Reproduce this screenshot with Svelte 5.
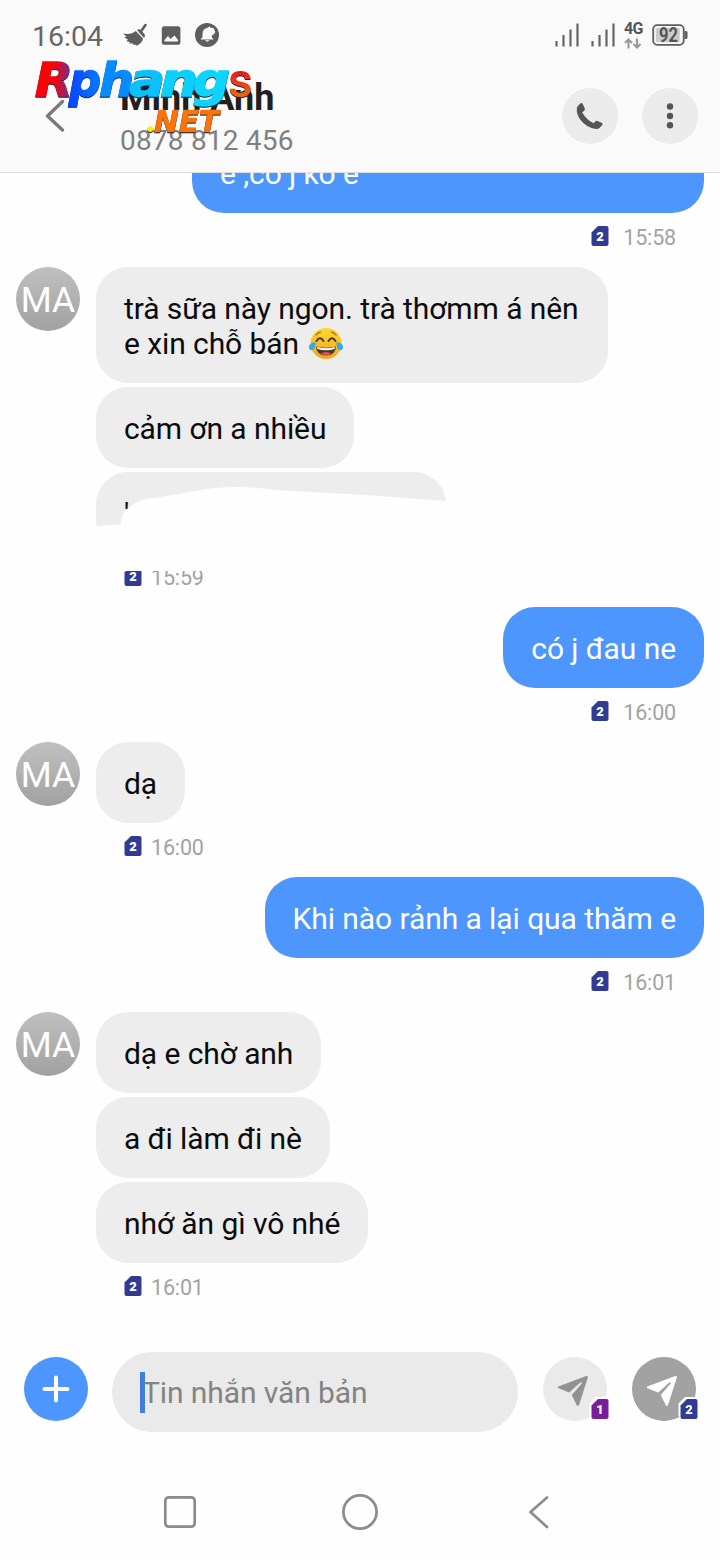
<script>
  const contact = { name: 'Minh Anh', initials: 'MA', phone: '0878 812 456' };

  const groups = [
    { mine: true, sim: 2, time: '15:58', messages: [{ lines: ['', 'e ,có j ko e'], wide: true }] },
    {
      mine: false,
      sim: 2,
      time: '15:59',
      erased: true,
      messages: [
        { lines: ['trà sữa này ngon. trà thơmm á nên', 'e xin chỗ bán'], joy: true, wide: true },
        { lines: ['cảm ơn a nhiều'] },
        { lines: ["'"], hidden: true }
      ]
    },
    { mine: true, sim: 2, time: '16:00', messages: [{ lines: ['có j đau ne'] }] },
    { mine: false, sim: 2, time: '16:00', messages: [{ lines: ['dạ'] }] },
    { mine: true, sim: 2, time: '16:01', messages: [{ lines: ['Khi nào rảnh a lại qua thăm e'] }] },
    {
      mine: false,
      sim: 2,
      time: '16:01',
      messages: [{ lines: ['dạ e chờ anh'] }, { lines: ['a đi làm đi nè'] }, { lines: ['nhớ ăn gì vô nhé'] }]
    }
  ];

  // letters of the stamp: x, width and fill of each
  const stamp = [
    { c: 'R', x: 0, w: 38, fill: 'url(#stamp-r)' },
    { c: 'p', x: 34, w: 32, fill: 'url(#stamp-p)' },
    { c: 'h', x: 64, w: 35, fill: '#078cff' },
    { c: 'a', x: 94, w: 36, fill: '#0cc0fb' },
    { c: 'n', x: 125, w: 38, fill: '#0cd0fc' },
    { c: 'g', x: 158, w: 37, fill: '#0cd4fd' }
  ];
</script>

{#snippet sim(n, color = '#303b94')}
  <svg class="sim" width="18" height="20" viewBox="0 0 18 20">
    <path d="M7 0H15.500Q17.500 0 17.500 2V18Q17.500 20 15.500 20H2.500Q.5 20 .5 18V6.500Z" fill={color} />
    <text x="9" y="15" text-anchor="middle">{n}</text>
  </svg>
{/snippet}

{#snippet plane()}
  <svg width="32" height="32" viewBox="0 0 32 32">
    <path
      d="M1.300 11.600 29.200 1Q31.400.5 30.800 2.700L22 30Q20.800 32 19.600 30L14.800 20 24.800 8.600Q25.400 6.700 23.300 7.600L12.200 17.400 1.400 13.300Q.2 12.500 1.300 11.600Z"
      fill="currentColor"
    />
  </svg>
{/snippet}

<div class="screen">
  <header>
    <div class="status">
      <span class="clock">16:04</span>
      <svg class="broom" width="25" height="24" viewBox="0 0 25 24">
        <path d="M22.500 2 17.500 9" stroke="#5e5e5e" stroke-width="2.600" stroke-linecap="round" />
        <path d="M14 7Q16 5.500 18 7.500L21.500 11Q22.800 13 21 15Z" fill="#5e5e5e" />
        <path
          d="M12.800 8 20 15.500Q19.500 20 13.500 22.800L12 21.500 10.500 22 9.500 20.300 6.500 20.800 6.800 19 3.500 18.300 5 16.500 1.200 14.500 3.500 13.500 0 10.500Q8 12 12.800 8Z"
          fill="#5e5e5e"
        />
      </svg>
      <svg class="photo" width="20" height="20" viewBox="0 0 20 20">
        <rect x=".8" y=".2" width="18.600" height="18.600" rx="2.500" fill="#5e5e5e" />
        <path d="M3.500 15.500V14L7 10 9.500 13 13.500 9.500 17 14V15.500Z" fill="#fafafa" />
      </svg>
      <svg class="bell" width="24" height="24" viewBox="0 0 24 24">
        <circle cx="12" cy="12" r="12" fill="#5e5e5e" />
        <path d="M5.500 16.500 7.500 14V11Q7.500 6 12 5L14.500 3.500Q16 5.500 18.500 5L20.300 9Q19.500 12 16.800 12.500V14L18.500 16.500ZM10 17.300H14.500Q12.300 20 10 17.300Z" fill="#fafafa" />
      </svg>
      <div class="system">
        {#each [0, 1] as i (i)}
          <svg width="24" height="24" viewBox="0 0 24 24">
            <path d="M1.500 18V23.500M8.500 12V23.500M15.500 6.500V23.500M22.500.5V23.500" stroke="#666" stroke-width="2.200" />
          </svg>
        {/each}
        <div class="network">
          <b>4G</b>
          <svg width="18" height="11" viewBox="0 0 18 11">
            <path d="M4.500 10.500V2M1 5 4.500 1.500 8 5M13 .5V9M9.500 6 13 9.500 16.500 6" fill="none" stroke="#999" stroke-width="2.100" />
          </svg>
        </div>
        <svg class="battery" width="36" height="22" viewBox="0 0 36 22">
          <rect x="1.200" y="1.200" width="30.500" height="19.600" rx="4" fill="#fafafa" stroke="#5e5e5e" stroke-width="1.800" />
          <rect x="3.800" y="3.800" width="24" height="14.400" rx="1.500" fill="#ccc" />
          <path d="M32.500 7H34Q35.500 7 35.500 8.500V13.500Q35.500 15 34 15H32.500Z" fill="#5e5e5e" />
          <text x="16.500" y="17.700" text-anchor="middle" textLength="19" lengthAdjust="spacingAndGlyphs">92</text>
        </svg>
      </div>
    </div>

    <div class="bar">
      <svg class="back" width="20" height="34" viewBox="0 0 20 34">
        <path d="M17.500 2.500 2.500 17 17.500 31" fill="none" stroke="#7a7a7a" stroke-width="3.400" stroke-linecap="round" stroke-linejoin="round" />
      </svg>
      <div class="who">
        <h1>{contact.name}</h1>
        <p>{contact.phone}</p>
      </div>
      <button class="round" aria-label="Gọi">
        <svg width="28" height="28" viewBox="0 0 28 28">
          <path
            d="M1.500 4.500 4.500 1.200Q5.700.4 6.500 1.600L8.800 6.400Q9.300 7.600 8.300 8.600L6.200 10.500Q10.500 17.800 17.600 21.300L19.300 19.500Q20.300 18.500 21.500 19L26 21Q27.200 21.800 26.300 23L23.500 26Q22.400 27.200 20 27Q10.500 26 4.200 17.600Q.5 12.500.8 7Q.8 5.300 1.500 4.500Z"
            fill="#555"
          />
        </svg>
      </button>
      <button class="round" aria-label="Thêm">
        <svg width="8" height="26" viewBox="0 0 8 26" fill="#555">
          <circle cx="4" cy="3.500" r="3.200" />
          <circle cx="4" cy="13" r="3.200" />
          <circle cx="4" cy="22.300" r="3.200" />
        </svg>
      </button>
    </div>

    <!-- site stamp lying over the contact name -->
    <svg class="stamp" width="226" height="84" viewBox="0 0 226 84">
      <defs>
        <linearGradient id="stamp-r">
          <stop offset=".5" stop-color="#f90309" />
          <stop offset="1" stop-color="#5638a8" />
        </linearGradient>
        <linearGradient id="stamp-p">
          <stop offset="0" stop-color="#0844ff" />
          <stop offset="1" stop-color="#087cff" />
        </linearGradient>
        <linearGradient id="stamp-s" x2="0" y2="1">
          <stop offset=".3" stop-color="#e5141c" />
          <stop offset=".8" stop-color="#f26a0c" />
        </linearGradient>
      </defs>
      <g class="letters">
        {#each stamp as l (l.c)}
          <text x={l.x} y="40.500" textLength={l.w} lengthAdjust="spacingAndGlyphs" fill={l.fill} stroke={l.fill}>{l.c}</text>
        {/each}
      </g>
      <text class="s" x="193" y="42" fill="url(#stamp-s)">s</text>
      <text class="dot" x="110" y="77">.</text>
      <text class="net" x="119" y="77" textLength="65" lengthAdjust="spacingAndGlyphs">NET</text>
    </svg>
  </header>

  <main>
    {#each groups as group, i (i)}
      <section class:mine={group.mine}>
        {#if !group.mine}
          <div class="avatar">{contact.initials}</div>
        {/if}
        <div class="stack">
          {#each group.messages as msg, j (j)}
            <div class="bubble" class:wide={msg.wide} class:hidden={msg.hidden}>
              {#each msg.lines as line, k (k)}
                <div class="line">
                  {line}
                  {#if msg.joy && k === msg.lines.length - 1}
                    <svg class="joy" width="36" height="34" viewBox="0 0 36 34">
                      <defs>
                        <linearGradient id="face" x2="0" y2="1">
                          <stop offset="0" stop-color="#fdd82f" />
                          <stop offset="1" stop-color="#f4a51f" />
                        </linearGradient>
                      </defs>
                      <circle cx="18" cy="16.500" r="15.500" fill="url(#face)" />
                      <path d="M8 19.500Q18 22 28 19.500Q27.500 28.500 18 28.500T8 19.500Z" fill="#4e342e" />
                      <path d="M9 20Q18 22.500 27 20L26.500 22Q18 24.500 9.500 22Z" fill="#fff" />
                      <path d="M12.500 26.500Q18 23.500 23.500 26.500Q18 29.500 12.500 26.500Z" fill="#ef4c50" />
                      <path d="M8.500 14Q12 8.500 15.500 14M20.500 14Q24 8.500 27.500 14" fill="none" stroke="#4e342e" stroke-width="2" stroke-linecap="round" />
                      <path d="M8 8Q10 5.500 12.500 5M28 8Q26 5.500 23.500 5" fill="none" stroke="#b9791c" stroke-width="1.500" stroke-linecap="round" />
                      <path d="M7.500 15Q1 16 .8 20Q1.500 24 5 23Q7.500 21.500 7.500 15ZM28.500 15Q35 16 35.200 20Q34.500 24 31 23Q28.500 21.500 28.500 15Z" fill="#35a9e5" />
                    </svg>
                  {/if}
                </div>
              {/each}
            </div>
          {/each}
          <div class="meta">
            {@render sim(group.sim)}
            <time>{group.time}</time>
          </div>
          {#if group.erased}
            <!-- white brush stroke over the last message of the group -->
            <svg class="eraser" width="360" height="100" viewBox="0 0 360 100">
              <path
                d="M-3 55Q14 52 25 53Q24 41 34 35Q43 26 60 26L105 18Q139 12 180 18L270 23 350 29H363V99H-3Z"
                fill="#fefefe"
              />
            </svg>
          {/if}
        </div>
      </section>
    {/each}
  </main>

  <footer>
    <button class="add" aria-label="Đính kèm">
      <svg width="28" height="28" viewBox="0 0 28 28">
        <path d="M14 2.500V25.500M2.500 14H25.500" stroke="#fff" stroke-width="4" stroke-linecap="round" />
      </svg>
    </button>
    <div class="input"><i></i><span>Tin nhắn văn bản</span></div>
    <button class="send" aria-label="Gửi bằng SIM 1">
      {@render plane()}
      <span class="tag">{@render sim(1, '#7b1e9c')}</span>
    </button>
    <button class="send active" aria-label="Gửi bằng SIM 2">
      {@render plane()}
      <span class="tag">{@render sim(2)}</span>
    </button>
  </footer>

  <nav>
    <svg width="36" height="36" viewBox="0 0 36 36"><rect x="3.300" y="3.300" width="29.400" height="29.400" rx="3.500" /></svg>
    <svg width="36" height="36" viewBox="0 0 36 36"><circle cx="18" cy="18" r="16.600" /></svg>
    <svg width="36" height="36" viewBox="0 0 36 36"><path d="M26 3.500 9.500 18 26 33" stroke-linecap="round" stroke-linejoin="round" /></svg>
  </nav>
</div>

<style>
  :global(body) {
    margin: 0;
    background: #fff;
  }
  .screen {
    width: 720px;
    height: 1560px;
    display: flex;
    flex-direction: column;
    overflow: hidden;
    background: #fefefe;
    color: #111;
    font-family: Roboto, 'Noto Sans', sans-serif;
  }
  svg {
    display: block;
    flex: none;
  }
  button {
    border: 0;
    padding: 0;
    display: grid;
    place-items: center;
    border-radius: 50%;
    flex: none;
  }

  header {
    position: relative;
    box-sizing: border-box;
    height: 173px;
    flex: none;
    background: #fafafa;
    border-bottom: 1px solid #dedede;
  }
  .status {
    height: 72px;
    box-sizing: border-box;
    padding: 0 33px 0 32px;
    display: flex;
    align-items: center;
  }
  .clock {
    width: 91px;
    font-size: 28.5px;
    color: #666;
  }
  .broom {
    position: relative;
    top: -1px;
  }
  .photo {
    margin-left: 13px;
  }
  .bell {
    margin-left: 14px;
    position: relative;
    top: -1px;
  }
  .system {
    margin-left: auto;
    display: flex;
    align-items: center;
    gap: 12px;
    position: relative;
    top: -1px;
    left: 1px;
  }
  .network {
    position: relative;
    width: 19px;
    margin: 0 -3px;
    display: flex;
    flex-direction: column;
    gap: 3px;
  }
  .network b {
    font-size: 16px;
    line-height: 13px;
    color: #555;
    letter-spacing: -0.7px;
    white-space: nowrap;
  }
  .battery text {
    font: bold 19.5px Roboto, sans-serif;
    fill: #555;
  }

  .bar {
    display: flex;
    align-items: center;
    height: 88px;
    padding: 0 22px 0 45px;
  }
  .who {
    flex: 1;
    margin: 6px 0 0 55px;
  }
  h1 {
    margin: 0;
    font-size: 36px;
    line-height: 43px;
    color: #1f1f1f;
  }
  p {
    margin: 0;
    font-size: 28px;
    line-height: 41px;
    color: #808080;
    letter-spacing: 0.2px;
  }
  .round {
    width: 56px;
    height: 56px;
    margin-left: 24px;
    background: #ebebeb;
  }
  .stamp {
    position: absolute;
    left: 35px;
    top: 55px;
    overflow: visible;
    filter: drop-shadow(0.7px 1.2px 0.3px #124);
  }
  .letters text {
    font: italic bold 46px 'DejaVu Sans', sans-serif;
    stroke-width: 1.3;
  }
  .s {
    font: 500 48px 'Roboto', sans-serif;
  }
  .dot {
    font: bold 38px 'Roboto', sans-serif;
    fill: #f7ee12;
  }
  .net {
    font: italic bold 31px 'DejaVu Sans', sans-serif;
    fill: #fb740b;
    stroke: #fb740b;
    stroke-width: 0.6;
  }

  main {
    height: 1144px;
    flex: none;
    display: flex;
    flex-direction: column;
    justify-content: flex-end;
    overflow: hidden;
  }
  section {
    display: flex;
    gap: 16px;
    padding: 0 16px;
  }
  section.mine {
    justify-content: flex-end;
  }
  .avatar {
    width: 64px;
    height: 64px;
    flex: none;
    display: flex;
    justify-content: center;
    align-items: center;
    box-sizing: border-box;
    padding-top: 2px;
    border-radius: 50%;
    background: linear-gradient(#c0c0c0, #a1a1a1);
    color: #fff;
    font-size: 35.5px;
  }
  .stack {
    position: relative;
    display: flex;
    flex-direction: column;
    align-items: flex-start;
  }
  .mine .stack {
    align-items: flex-end;
  }
  .bubble {
    box-sizing: border-box;
    padding: 24px 28px 22px;
    border-radius: 32px;
    background: #ededed;
    color: #0b0b0b;
    font-size: 30px;
    line-height: 35px;
    letter-spacing: -0.08px;
  }
  .bubble + .bubble {
    margin-top: 4px;
  }
  .mine .bubble {
    background: #4d96fe;
    color: #fff;
  }
  .wide {
    width: 512px;
  }
  .hidden {
    width: 350px;
  }
  .line {
    display: flex;
    align-items: center;
    height: 35px;
    white-space: nowrap;
  }
  .joy {
    margin-left: 9px;
  }
  .meta {
    height: 54px;
    display: flex;
    align-items: center;
    gap: 9px;
    padding: 0 28px;
    color: #a2a2a2;
    font-size: 21.5px;
    line-height: 26px;
    letter-spacing: -0.15px;
  }
  .mine .meta {
    gap: 14px;
  }
  .meta .sim {
    position: relative;
    top: -4px;
  }
  .sim text {
    font: 900 13px Roboto, sans-serif;
    letter-spacing: 0;
    fill: #fff;
  }
  .meta time {
    position: relative;
    top: -2px;
  }
  .eraser {
    position: absolute;
    left: 0;
    top: 205px;
    filter: blur(0.6px);
  }

  footer {
    height: 147px;
    box-sizing: border-box;
    padding: 35px 24px 0;
    display: flex;
    align-items: flex-start;
  }
  .add {
    width: 64px;
    height: 64px;
    margin-top: 5px;
    background: #4d96fe;
  }
  .input {
    width: 406px;
    height: 80px;
    margin-left: 24px;
    box-sizing: border-box;
    padding-left: 28px;
    display: flex;
    align-items: center;
    border-radius: 40px;
    background: #eaeaea;
    color: #838383;
    font-size: 30px;
    letter-spacing: -0.09px;
  }
  .input i {
    width: 5px;
    height: 41px;
    margin-right: -3px;
    background: #3c7fe0;
  }
  .send {
    position: relative;
    width: 64px;
    height: 64px;
    margin: 5px 0 0 25px;
    padding: 3px 4px 0 0;
    background: #eaeaea;
    color: #929292;
  }
  .active {
    background: #a2a2a2;
    color: #fff;
  }
  .tag {
    position: absolute;
    right: -2px;
    bottom: 2px;
    filter: drop-shadow(-1px -1px 0 #fff) drop-shadow(-1px -1px 0 #fff);
  }

  nav {
    flex: 1;
    display: flex;
    justify-content: center;
    gap: 144px;
    padding-top: 30px;
  }
  nav svg {
    fill: none;
    stroke: #8c8c8c;
    stroke-width: 2.7;
  }
  nav svg:last-child {
    position: relative;
    left: -1px;
  }
</style>
